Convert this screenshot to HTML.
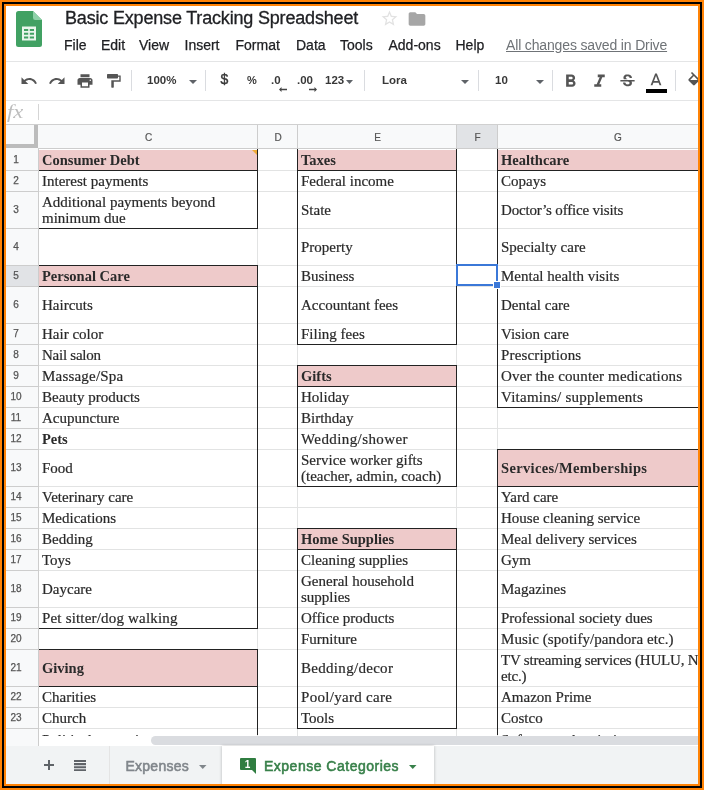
<!DOCTYPE html>
<html lang="en"><head><meta charset="utf-8"><title>Basic Expense Tracking Spreadsheet</title>
<style>
html,body{margin:0;padding:0;background:#fff}
body{width:704px;height:790px;overflow:hidden;position:relative;font-family:"Liberation Sans", sans-serif}
#frame{position:absolute;left:0;top:0;width:704px;height:790px;box-sizing:border-box;border:2px solid #ff8306;z-index:50;pointer-events:none}
#frame:before{content:"";position:absolute;left:0;top:0;right:0;bottom:0;border:2px solid #000}
#frame:after{content:"";position:absolute;left:2px;top:2px;right:2px;bottom:2px;border:2px solid #ff8306}
#app{position:absolute;left:0;top:0;width:704px;height:790px;overflow:hidden;background:#fff;will-change:transform}
.abs{position:absolute}
.t{position:absolute;white-space:nowrap}
#title{left:65px;top:7px;font-size:18px;line-height:22px;color:#202124;letter-spacing:-0.18px;-webkit-text-stroke:0.3px #202124}
.menu{top:36px;font-size:14px;line-height:18px;color:#202124;-webkit-text-stroke:0.25px #202124}
#saved{top:36px;left:506px;font-size:14px;line-height:18px;color:#6f7377;text-decoration:underline;letter-spacing:-0.15px}
.tb{top:71.5px;font-size:11.5px;line-height:16px;color:#383838;font-weight:bold}
.sep{position:absolute;top:70px;width:1px;height:21px;background:#dadce0}
.hl{position:absolute;height:1px;left:0;width:704px}
.vl{position:absolute;width:1px}
.cell{position:absolute;display:flex;align-items:center;font-family:"Liberation Serif", serif;font-size:15px;line-height:16px;color:#2a2a2a;-webkit-text-stroke:0.2px #2a2a2a;white-space:nowrap;overflow:hidden;box-sizing:border-box;padding-left:3px}
.cell.b{font-weight:bold;font-size:14.5px;-webkit-text-stroke:0}
.rn{position:absolute;left:6px;width:20px;text-align:center;font-size:10px;color:#555;line-height:12px;-webkit-text-stroke:0.25px #555}
.ch{position:absolute;top:131px;text-align:center;font-size:10px;color:#555;line-height:12px;-webkit-text-stroke:0.2px #555}
.tab{position:absolute;top:757px;font-size:14px;line-height:18px;-webkit-text-stroke:0.55px currentColor}

</style></head><body><div id="app">
<svg class="abs" style="left:16px;top:11px" width="26" height="36" viewBox="0 0 26 36">
<path d="M2.5 0H17l9 9v24.5A2.500 2.500 0 0 1 23.500 36H2.500A2.500 2.500 0 0 1 0 33.500V2.500A2.500 2.500 0 0 1 2.500 0z" fill="#41a163"/>
<path d="M17 0l9 9h-6.800A2.200 2.200 0 0 1 17 6.800z" fill="#8ed1a8"/>
<path d="M6 15.500h14v14H6z" fill="#e9f5ec"/>
<path d="M8 18h4.200v2H8zm5.800 0H18v2h-4.200zM8 21.700h4.200v2H8zm5.800 0H18v2h-4.200zM8 25.400h4.200v2H8zm5.800 0H18v2h-4.200z" fill="#41a163"/>
</svg>
<div class="t" id="title">Basic Expense Tracking Spreadsheet</div>
<svg class="abs" style="left:380px;top:9px" width="19" height="19" viewBox="0 0 24 24"><path fill="#e2e2e2" d="M22 9.240l-7.190-.620L12 2 9.190 8.630 2 9.240l5.460 4.730L5.820 21 12 17.270 18.180 21l-1.630-7.030L22 9.240zM12 15.400l-3.760 2.270 1-4.280-3.320-2.880 4.380-.380L12 6.100l1.710 4.040 4.380.380-3.320 2.880 1 4.280L12 15.400z"/></svg>
<svg class="abs" style="left:407px;top:9px" width="20" height="20" viewBox="0 0 24 24"><path fill="#a6a6a6" d="M10 4H4c-1.100 0-1.990.900-1.990 2L2 18c0 1.100.900 2 2 2h16c1.100 0 2-.900 2-2V8c0-1.100-.900-2-2-2h-8l-2-2z"/></svg>
<div class="t menu" style="left:64px">File</div>
<div class="t menu" style="left:101px">Edit</div>
<div class="t menu" style="left:139px">View</div>
<div class="t menu" style="left:184.5px">Insert</div>
<div class="t menu" style="left:235.5px">Format</div>
<div class="t menu" style="left:296px">Data</div>
<div class="t menu" style="left:340px">Tools</div>
<div class="t menu" style="left:388.5px">Add-ons</div>
<div class="t menu" style="left:455.5px">Help</div>
<div class="t" id="saved">All changes saved in Drive</div>
<div class="hl" style="top:61px;background:#e4e5e6"></div>
<svg class="abs" style="left:20.0px;top:72.0px" width="18" height="18" viewBox="0 0 24 24"><path fill="#555" d="M12.500 8c-2.650 0-5.050.990-6.900 2.600L2 7v9h9l-3.620-3.620c1.390-1.160 3.160-1.880 5.120-1.880 3.540 0 6.550 2.310 7.600 5.500l2.370-.780C21.080 11.030 17.150 8 12.500 8z"/></svg>
<svg class="abs" style="left:48.0px;top:72.0px" width="18" height="18" viewBox="0 0 24 24"><path fill="#555" d="M18.400 10.600C16.550 8.990 14.150 8 11.500 8c-4.650 0-8.580 3.030-9.960 7.220L3.900 16c1.050-3.190 4.050-5.500 7.600-5.500 1.950 0 3.730.720 5.120 1.880L13 16h9V7l-3.600 3.600z"/></svg>
<svg class="abs" style="left:76.0px;top:72.0px" width="18" height="18" viewBox="0 0 24 24"><path fill="#555" d="M19 8H5c-1.660 0-3 1.340-3 3v6h4v4h12v-4h4v-6c0-1.660-1.340-3-3-3zm-3 11H8v-5h8v5zm3-7c-.550 0-1-.450-1-1s.450-1 1-1 1 .450 1 1-.450 1-1 1zm-1-9H6v4h12V3z"/></svg>
<svg class="abs" style="left:104px;top:72px" width="18" height="18" viewBox="0 0 18 18"><path fill="#555" d="M3.700 2h9.600a.700.700 0 0 1 .700.700v3.100a.700.700 0 0 1-.700.700H3.700A.700.700 0 0 1 3 5.800V2.700A.700.700 0 0 1 3.700 2zM14 3.400h2.700v6.300H9.800v5.400a.600.600 0 0 1-.600.600H7.900a.600.600 0 0 1-.600-.600V8.300h8V4.800H14z"/></svg>
<div class="sep" style="left:131px"></div>
<div class="t tb" style="left:147px">100%</div>
<svg class="abs" style="left:189.0px;top:79.5px" width="8" height="4" viewBox="0 0 8 4"><path fill="#5f6368" d="M0 0h8l-4.0 4z"/></svg>
<div class="sep" style="left:205px"></div>
<div class="t tb" style="left:220.500px;font-size:14px;top:70.500px;font-weight:normal;-webkit-text-stroke:0.4px #383838">$</div>
<div class="t tb" style="left:247px;font-size:11px">%</div>
<div class="t tb" style="left:271px">.0</div>
<div class="t tb" style="left:297px">.00</div>
<svg class="abs" style="left:279px;top:87px" width="8" height="5" viewBox="0 0 8 5"><path fill="#444" d="M2.500 0v1.800H8v1.400H2.500V5L0 2.500z"/></svg>
<svg class="abs" style="left:309px;top:87px" width="8" height="5" viewBox="0 0 8 5"><path fill="#444" d="M5.500 0v1.800H0v1.400h5.500V5L8 2.500z"/></svg>
<div class="t tb" style="left:325px">123</div>
<svg class="abs" style="left:345.5px;top:79.5px" width="7" height="4" viewBox="0 0 7 4"><path fill="#5f6368" d="M0 0h7l-3.5 4z"/></svg>
<div class="sep" style="left:364px"></div>
<div class="t tb" style="left:382px">Lora</div>
<svg class="abs" style="left:461.0px;top:79.5px" width="8" height="4" viewBox="0 0 8 4"><path fill="#5f6368" d="M0 0h8l-4.0 4z"/></svg>
<div class="sep" style="left:478px"></div>
<div class="t tb" style="left:495px">10</div>
<svg class="abs" style="left:536.0px;top:79.5px" width="8" height="4" viewBox="0 0 8 4"><path fill="#5f6368" d="M0 0h8l-4.0 4z"/></svg>
<div class="sep" style="left:552px"></div>
<svg class="abs" style="left:559.85px;top:71.0px" width="21" height="21" viewBox="0 0 24 24"><path fill="#555" d="M15.600 10.790c.970-.670 1.650-1.770 1.650-2.790 0-2.260-1.750-4-4-4H7v14h7.040c2.090 0 3.710-1.700 3.710-3.790 0-1.520-.860-2.820-2.150-3.420zM10 6.500h3c.830 0 1.500.670 1.500 1.500s-.670 1.500-1.500 1.500h-3v-3zm3.500 9H10v-3h3.500c.830 0 1.500.670 1.500 1.500s-.670 1.500-1.500 1.500z"/></svg>
<svg class="abs" style="left:588.6px;top:71.0px" width="21" height="21" viewBox="0 0 24 24"><path fill="#555" d="M10 4v3h2.210l-3.420 8H6v3h8v-3h-2.210l3.420-8H18V4z"/></svg>
<svg class="abs" style="left:617.5px;top:72.1px" width="19" height="19" viewBox="0 0 24 24"><path fill="#555" d="M7.240 8.750c-.260-.480-.390-1.030-.390-1.670 0-.610.130-1.160.400-1.670.260-.500.630-.930 1.110-1.290.480-.350 1.050-.630 1.700-.830.660-.190 1.390-.290 2.180-.290.810 0 1.540.110 2.210.340.660.220 1.230.540 1.690.940.470.400.830.880 1.080 1.430.250.550.380 1.150.380 1.810h-3.010c0-.310-.050-.590-.150-.850-.090-.270-.240-.490-.440-.680-.200-.190-.450-.330-.750-.440-.300-.100-.660-.160-1.060-.160-.390 0-.740.040-1.030.130-.290.090-.530.210-.720.360-.190.160-.340.340-.440.550-.100.210-.150.430-.150.660 0 .480.250.880.740 1.210.380.250.770.480 1.410.700H7.390c-.050-.080-.110-.170-.150-.250zM21 12v-2H3v2h9.620c.180.070.400.140.550.200.370.170.660.340.870.510.210.170.350.360.430.570.070.200.110.430.110.690 0 .230-.050.450-.140.660-.090.200-.230.380-.420.530-.190.150-.420.260-.710.350-.290.080-.630.130-1.010.130-.430 0-.830-.040-1.180-.130s-.660-.230-.910-.420c-.250-.190-.450-.440-.590-.750-.140-.310-.250-.760-.250-1.210H6.400c0 .550.080 1.130.240 1.580.160.450.370.850.650 1.210.280.350.600.660.980.920.370.260.780.480 1.220.650.440.170.900.300 1.380.390.480.080.960.130 1.440.130.800 0 1.530-.090 2.180-.280s1.210-.450 1.670-.790c.460-.340.820-.770 1.070-1.270s.380-1.070.380-1.710c0-.600-.100-1.140-.310-1.610-.050-.110-.110-.230-.170-.330H21z"/></svg>
<svg class="abs" style="left:645.9px;top:70.9px" width="20" height="20" viewBox="0 0 24 24"><path fill="#555" d="M11 3L5.500 17h2.250l1.120-3h6.250l1.120 3h2.250L13 3h-2zm-1.380 9L12 5.670 14.380 12H9.620z"/></svg>
<div class="abs" style="left:646px;top:89px;width:21px;height:3.500px;background:#000"></div>
<div class="sep" style="left:675px"></div>
<svg class="abs" style="left:686.0px;top:71.5px" width="19" height="19" viewBox="0 0 24 24"><path fill="#555" d="M16.560 8.940L7.620 0 6.210 1.410l2.380 2.380-5.150 5.150c-.590.590-.590 1.540 0 2.120l5.500 5.500c.290.290.680.440 1.060.440s.770-.150 1.060-.440l5.500-5.500c.590-.580.590-1.530 0-2.120zM5.210 10L10 5.210 14.790 10H5.210zM19 11.500s-2 2.170-2 3.500c0 1.100.900 2 2 2s2-.900 2-2c0-1.330-2-3.500-2-3.500z"/></svg>
<div class="hl" style="top:100px;background:#e4e5e6"></div>
<div class="t" style="left:7px;top:102px;font-family:'Liberation Serif',serif;font-style:italic;font-size:18px;line-height:20px;color:#bdbdbd;transform:scaleX(1.25);transform-origin:0 0">fx</div>
<div class="vl" style="left:38px;top:104px;height:16px;background:#d5d5d5"></div>
<div class="hl" style="top:124px;background:#d0d0d0"></div>
<div class="abs" style="left:0;top:125px;width:704px;height:621px;overflow:hidden">
<div class="abs" style="left:0;top:0;width:704px;height:24px;background:#f8f9fa"></div>
<div class="abs" style="left:0;top:0;width:38px;height:621px;background:#f8f9fa"></div>
<div class="abs" style="left:457px;top:0;width:41px;height:24px;background:#e1e3e6"></div>
<div class="abs" style="left:0;top:141px;width:38px;height:20px;background:#e1e3e6"></div>
<div class="abs" style="left:0;top:19px;width:38px;height:4px;background:#bcbcbc"></div>
<div class="abs" style="left:34px;top:0;width:4px;height:23px;background:#bcbcbc"></div>
<div class="cell b" style="left:39px;top:25px;width:218px;height:20px;background:#eecaca;"><span>Consumer Debt</span></div>
<div class="cell" style="left:39px;top:46px;width:218px;height:20px;"><span>Interest payments</span></div>
<div class="cell" style="left:39px;top:67px;width:218px;height:36px;"><span>Additional payments beyond<br>minimum due</span></div>
<div class="cell b" style="left:39px;top:141px;width:218px;height:20px;background:#eecaca;"><span>Personal Care</span></div>
<div class="cell" style="left:39px;top:162px;width:218px;height:36px;"><span>Haircuts</span></div>
<div class="cell" style="left:39px;top:199px;width:218px;height:20px;"><span>Hair color</span></div>
<div class="cell" style="left:39px;top:220px;width:218px;height:20px;letter-spacing:-0.25px;"><span>Nail salon</span></div>
<div class="cell" style="left:39px;top:241px;width:218px;height:20px;letter-spacing:0.2px;"><span>Massage/Spa</span></div>
<div class="cell" style="left:39px;top:262px;width:218px;height:20px;"><span>Beauty products</span></div>
<div class="cell" style="left:39px;top:283px;width:218px;height:20px;"><span>Acupuncture</span></div>
<div class="cell b" style="left:39px;top:304px;width:218px;height:20px;"><span>Pets</span></div>
<div class="cell" style="left:39px;top:325px;width:218px;height:36px;"><span>Food</span></div>
<div class="cell" style="left:39px;top:362px;width:218px;height:20px;"><span>Veterinary care</span></div>
<div class="cell" style="left:39px;top:383px;width:218px;height:20px;"><span>Medications</span></div>
<div class="cell" style="left:39px;top:404px;width:218px;height:20px;"><span>Bedding</span></div>
<div class="cell" style="left:39px;top:425px;width:218px;height:20px;"><span>Toys</span></div>
<div class="cell" style="left:39px;top:446px;width:218px;height:36px;"><span>Daycare</span></div>
<div class="cell" style="left:39px;top:483px;width:218px;height:20px;letter-spacing:0.18px;"><span>Pet sitter/dog walking</span></div>
<div class="cell b" style="left:39px;top:525px;width:218px;height:36px;background:#eecaca;"><span>Giving</span></div>
<div class="cell" style="left:39px;top:562px;width:218px;height:20px;"><span>Charities</span></div>
<div class="cell" style="left:39px;top:583px;width:218px;height:20px;"><span>Church</span></div>
<div class="cell" style="left:39px;top:604px;width:218px;height:20px;padding-top:2px;"><span>Political campaigns</span></div>
<div class="cell b" style="left:298px;top:25px;width:158px;height:20px;background:#eecaca;"><span>Taxes</span></div>
<div class="cell" style="left:298px;top:46px;width:158px;height:20px;"><span>Federal income</span></div>
<div class="cell" style="left:298px;top:67px;width:158px;height:36px;"><span>State</span></div>
<div class="cell" style="left:298px;top:104px;width:158px;height:36px;"><span>Property</span></div>
<div class="cell" style="left:298px;top:141px;width:158px;height:20px;"><span>Business</span></div>
<div class="cell" style="left:298px;top:162px;width:158px;height:36px;"><span>Accountant fees</span></div>
<div class="cell" style="left:298px;top:199px;width:158px;height:20px;"><span>Filing fees</span></div>
<div class="cell b" style="left:298px;top:241px;width:158px;height:20px;background:#eecaca;"><span>Gifts</span></div>
<div class="cell" style="left:298px;top:262px;width:158px;height:20px;"><span>Holiday</span></div>
<div class="cell" style="left:298px;top:283px;width:158px;height:20px;"><span>Birthday</span></div>
<div class="cell" style="left:298px;top:304px;width:158px;height:20px;letter-spacing:0.4px;"><span>Wedding/shower</span></div>
<div class="cell" style="left:298px;top:325px;width:158px;height:36px;"><span>Service worker gifts<br>(teacher, admin, coach)</span></div>
<div class="cell b" style="left:298px;top:404px;width:158px;height:20px;background:#eecaca;"><span>Home Supplies</span></div>
<div class="cell" style="left:298px;top:425px;width:158px;height:20px;"><span>Cleaning supplies</span></div>
<div class="cell" style="left:298px;top:446px;width:158px;height:36px;"><span>General household<br>supplies</span></div>
<div class="cell" style="left:298px;top:483px;width:158px;height:20px;"><span>Office products</span></div>
<div class="cell" style="left:298px;top:504px;width:158px;height:20px;"><span>Furniture</span></div>
<div class="cell" style="left:298px;top:525px;width:158px;height:36px;letter-spacing:0.3px;"><span>Bedding/decor</span></div>
<div class="cell" style="left:298px;top:562px;width:158px;height:20px;letter-spacing:0.3px;"><span>Pool/yard care</span></div>
<div class="cell" style="left:298px;top:583px;width:158px;height:20px;"><span>Tools</span></div>
<div class="cell b" style="left:498px;top:25px;width:239px;height:20px;background:#eecaca;"><span>Healthcare</span></div>
<div class="cell" style="left:498px;top:46px;width:239px;height:20px;"><span>Copays</span></div>
<div class="cell" style="left:498px;top:67px;width:239px;height:36px;letter-spacing:-0.18px;"><span>Doctor’s office visits</span></div>
<div class="cell" style="left:498px;top:104px;width:239px;height:36px;"><span>Specialty care</span></div>
<div class="cell" style="left:498px;top:141px;width:239px;height:20px;"><span>Mental health visits</span></div>
<div class="cell" style="left:498px;top:162px;width:239px;height:36px;"><span>Dental care</span></div>
<div class="cell" style="left:498px;top:199px;width:239px;height:20px;"><span>Vision care</span></div>
<div class="cell" style="left:498px;top:220px;width:239px;height:20px;letter-spacing:0.15px;"><span>Prescriptions</span></div>
<div class="cell" style="left:498px;top:241px;width:239px;height:20px;letter-spacing:0.15px;"><span>Over the counter medications</span></div>
<div class="cell" style="left:498px;top:262px;width:239px;height:20px;letter-spacing:0.24px;"><span>Vitamins/ supplements</span></div>
<div class="cell b" style="left:498px;top:325px;width:239px;height:36px;background:#eecaca;letter-spacing:0.35px;"><span>Services/Memberships</span></div>
<div class="cell" style="left:498px;top:362px;width:239px;height:20px;"><span>Yard care</span></div>
<div class="cell" style="left:498px;top:383px;width:239px;height:20px;"><span>House cleaning service</span></div>
<div class="cell" style="left:498px;top:404px;width:239px;height:20px;"><span>Meal delivery services</span></div>
<div class="cell" style="left:498px;top:425px;width:239px;height:20px;"><span>Gym</span></div>
<div class="cell" style="left:498px;top:446px;width:239px;height:36px;"><span>Magazines</span></div>
<div class="cell" style="left:498px;top:483px;width:239px;height:20px;"><span>Professional society dues</span></div>
<div class="cell" style="left:498px;top:504px;width:239px;height:20px;letter-spacing:0.08px;"><span>Music (spotify/pandora etc.)</span></div>
<div class="cell" style="left:498px;top:525px;width:239px;height:36px;letter-spacing:-0.2px;"><span>TV streaming services (HULU, Netflix<br>etc.)</span></div>
<div class="cell" style="left:498px;top:562px;width:239px;height:20px;"><span>Amazon Prime</span></div>
<div class="cell" style="left:498px;top:583px;width:239px;height:20px;"><span>Costco</span></div>
<div class="cell" style="left:498px;top:604px;width:239px;height:20px;padding-top:2px;"><span>Software subscriptions</span></div>
<div class="hl" style="top:45px;background:#e2e3e3"></div>
<div class="hl" style="top:66px;background:#e2e3e3"></div>
<div class="hl" style="top:103px;background:#e2e3e3"></div>
<div class="hl" style="top:140px;background:#e2e3e3"></div>
<div class="hl" style="top:161px;background:#e2e3e3"></div>
<div class="hl" style="top:198px;background:#e2e3e3"></div>
<div class="hl" style="top:219px;background:#e2e3e3"></div>
<div class="hl" style="top:240px;background:#e2e3e3"></div>
<div class="hl" style="top:261px;background:#e2e3e3"></div>
<div class="hl" style="top:282px;background:#e2e3e3"></div>
<div class="hl" style="top:303px;background:#e2e3e3"></div>
<div class="hl" style="top:324px;background:#e2e3e3"></div>
<div class="hl" style="top:361px;background:#e2e3e3"></div>
<div class="hl" style="top:382px;background:#e2e3e3"></div>
<div class="hl" style="top:403px;background:#e2e3e3"></div>
<div class="hl" style="top:424px;background:#e2e3e3"></div>
<div class="hl" style="top:445px;background:#e2e3e3"></div>
<div class="hl" style="top:482px;background:#e2e3e3"></div>
<div class="hl" style="top:503px;background:#e2e3e3"></div>
<div class="hl" style="top:524px;background:#e2e3e3"></div>
<div class="hl" style="top:561px;background:#e2e3e3"></div>
<div class="hl" style="top:582px;background:#e2e3e3"></div>
<div class="hl" style="top:603px;background:#e2e3e3"></div>
<div class="hl" style="top:624px;background:#e2e3e3"></div>
<div class="hl" style="top:23px;background:#cdcdcd;left:38px"></div>
<div class="vl" style="left:257px;top:0;height:621px;background:#e2e3e3"></div>
<div class="vl" style="left:257px;top:0;height:24px;background:#cdcdcd"></div>
<div class="vl" style="left:297px;top:0;height:621px;background:#e2e3e3"></div>
<div class="vl" style="left:297px;top:0;height:24px;background:#cdcdcd"></div>
<div class="vl" style="left:456px;top:0;height:621px;background:#e2e3e3"></div>
<div class="vl" style="left:456px;top:0;height:24px;background:#cdcdcd"></div>
<div class="vl" style="left:497px;top:0;height:621px;background:#e2e3e3"></div>
<div class="vl" style="left:497px;top:0;height:24px;background:#cdcdcd"></div>
<div class="vl" style="left:737px;top:0;height:621px;background:#e2e3e3"></div>
<div class="vl" style="left:737px;top:0;height:24px;background:#cdcdcd"></div>
<div class="vl" style="left:38px;top:24px;height:621px;background:#cdcdcd"></div>
<div class="hl" style="top:45px;background:#cdcdcd;width:38px"></div>
<div class="hl" style="top:66px;background:#cdcdcd;width:38px"></div>
<div class="hl" style="top:103px;background:#cdcdcd;width:38px"></div>
<div class="hl" style="top:140px;background:#cdcdcd;width:38px"></div>
<div class="hl" style="top:161px;background:#cdcdcd;width:38px"></div>
<div class="hl" style="top:198px;background:#cdcdcd;width:38px"></div>
<div class="hl" style="top:219px;background:#cdcdcd;width:38px"></div>
<div class="hl" style="top:240px;background:#cdcdcd;width:38px"></div>
<div class="hl" style="top:261px;background:#cdcdcd;width:38px"></div>
<div class="hl" style="top:282px;background:#cdcdcd;width:38px"></div>
<div class="hl" style="top:303px;background:#cdcdcd;width:38px"></div>
<div class="hl" style="top:324px;background:#cdcdcd;width:38px"></div>
<div class="hl" style="top:361px;background:#cdcdcd;width:38px"></div>
<div class="hl" style="top:382px;background:#cdcdcd;width:38px"></div>
<div class="hl" style="top:403px;background:#cdcdcd;width:38px"></div>
<div class="hl" style="top:424px;background:#cdcdcd;width:38px"></div>
<div class="hl" style="top:445px;background:#cdcdcd;width:38px"></div>
<div class="hl" style="top:482px;background:#cdcdcd;width:38px"></div>
<div class="hl" style="top:503px;background:#cdcdcd;width:38px"></div>
<div class="hl" style="top:524px;background:#cdcdcd;width:38px"></div>
<div class="hl" style="top:561px;background:#cdcdcd;width:38px"></div>
<div class="hl" style="top:582px;background:#cdcdcd;width:38px"></div>
<div class="hl" style="top:603px;background:#cdcdcd;width:38px"></div>
<div class="hl" style="top:624px;background:#cdcdcd;width:38px"></div>
<div class="abs" style="left:39px;top:45px;width:219px;height:1px;background:#222"></div>
<div class="abs" style="left:39px;top:103px;width:219px;height:1px;background:#222"></div>
<div class="abs" style="left:39px;top:140px;width:219px;height:1px;background:#222"></div>
<div class="abs" style="left:39px;top:161px;width:219px;height:1px;background:#222"></div>
<div class="abs" style="left:39px;top:503px;width:219px;height:1px;background:#222"></div>
<div class="abs" style="left:39px;top:524px;width:219px;height:1px;background:#222"></div>
<div class="abs" style="left:39px;top:561px;width:219px;height:1px;background:#222"></div>
<div class="abs" style="left:257px;top:24px;width:1px;height:80px;background:#222"></div>
<div class="abs" style="left:257px;top:140px;width:1px;height:364px;background:#222"></div>
<div class="abs" style="left:257px;top:524px;width:1px;height:86px;background:#222"></div>
<div class="abs" style="left:297px;top:45px;width:160px;height:1px;background:#222"></div>
<div class="abs" style="left:297px;top:219px;width:160px;height:1px;background:#222"></div>
<div class="abs" style="left:297px;top:240px;width:160px;height:1px;background:#222"></div>
<div class="abs" style="left:297px;top:261px;width:160px;height:1px;background:#222"></div>
<div class="abs" style="left:297px;top:361px;width:160px;height:1px;background:#222"></div>
<div class="abs" style="left:297px;top:403px;width:160px;height:1px;background:#222"></div>
<div class="abs" style="left:297px;top:424px;width:160px;height:1px;background:#222"></div>
<div class="abs" style="left:297px;top:603px;width:160px;height:1px;background:#222"></div>
<div class="abs" style="left:297px;top:24px;width:1px;height:196px;background:#222"></div>
<div class="abs" style="left:297px;top:240px;width:1px;height:122px;background:#222"></div>
<div class="abs" style="left:297px;top:403px;width:1px;height:201px;background:#222"></div>
<div class="abs" style="left:456px;top:24px;width:1px;height:196px;background:#222"></div>
<div class="abs" style="left:456px;top:240px;width:1px;height:122px;background:#222"></div>
<div class="abs" style="left:456px;top:403px;width:1px;height:201px;background:#222"></div>
<div class="abs" style="left:497px;top:45px;width:207px;height:1px;background:#222"></div>
<div class="abs" style="left:497px;top:282px;width:207px;height:1px;background:#222"></div>
<div class="abs" style="left:497px;top:324px;width:207px;height:1px;background:#222"></div>
<div class="abs" style="left:497px;top:361px;width:207px;height:1px;background:#222"></div>
<div class="abs" style="left:497px;top:24px;width:1px;height:259px;background:#222"></div>
<div class="abs" style="left:497px;top:324px;width:1px;height:286px;background:#222"></div>
<svg class="abs" style="left:252px;top:25px" width="5" height="5" viewBox="0 0 5 5"><path d="M0 0h5v5z" fill="#efaa35"/></svg>
<div class="abs" style="left:456px;top:139px;width:42px;height:22px;box-sizing:border-box;border:2px solid #3b78d8"></div>
<div class="abs" style="left:494px;top:157px;width:6px;height:6px;background:#3b78d8;border:1px solid #fff;box-sizing:content-box;margin:-1px"></div>
<div class="rn" style="top:29.0px">1</div>
<div class="rn" style="top:50.0px">2</div>
<div class="rn" style="top:79.0px">3</div>
<div class="rn" style="top:116.0px">4</div>
<div class="rn" style="top:145.0px">5</div>
<div class="rn" style="top:174.0px">6</div>
<div class="rn" style="top:203.0px">7</div>
<div class="rn" style="top:224.0px">8</div>
<div class="rn" style="top:245.0px">9</div>
<div class="rn" style="top:266.0px">10</div>
<div class="rn" style="top:287.0px">11</div>
<div class="rn" style="top:308.0px">12</div>
<div class="rn" style="top:337.0px">13</div>
<div class="rn" style="top:366.0px">14</div>
<div class="rn" style="top:387.0px">15</div>
<div class="rn" style="top:408.0px">16</div>
<div class="rn" style="top:429.0px">17</div>
<div class="rn" style="top:458.0px">18</div>
<div class="rn" style="top:487.0px">19</div>
<div class="rn" style="top:508.0px">20</div>
<div class="rn" style="top:537.0px">21</div>
<div class="rn" style="top:566.0px">22</div>
<div class="rn" style="top:587.0px">23</div>
<div class="ch" style="left:39px;width:219px;top:7px">C</div>
<div class="ch" style="left:258px;width:40px;top:7px">D</div>
<div class="ch" style="left:298px;width:159px;top:7px">E</div>
<div class="ch" style="left:457px;width:41px;top:7px">F</div>
<div class="ch" style="left:498px;width:240px;top:7px">G</div>
<div class="abs" style="left:39px;top:611px;width:704px;height:10px;background:#fff"></div>
<div class="abs" style="left:151px;top:611px;width:600px;height:9px;border-radius:4.500px;background:#dadce0"></div>
</div>
<div class="abs" style="left:0;top:746px;width:704px;height:44px;background:#f1f3f4"></div>
<div class="abs" style="left:222px;top:746px;width:212px;height:44px;background:#fff;box-shadow:0 0 3px rgba(0,0,0,.25)"></div>
<div class="vl" style="left:109px;top:746px;height:40px;background:#e4e4e4"></div>
<svg class="abs" style="left:44px;top:760px" width="10" height="10" viewBox="0 0 10 10"><path fill="#5f6368" d="M4 0h2v4h4v2H6v4H4V6H0V4h4z"/></svg>
<svg class="abs" style="left:73.700px;top:759.800px" width="12.300" height="11.400" viewBox="0 0 13 11" preserveAspectRatio="none"><path fill="#5f6368" d="M0 0h13v2H0zM0 3h13v2H0zM0 6h13v2H0zM0 9h13v2H0z"/></svg>
<div class="tab" style="left:125.500px;letter-spacing:0.25px;color:#80868b">Expenses</div>
<svg class="abs" style="left:199.25px;top:764.5px" width="7.5" height="4" viewBox="0 0 7.5 4"><path fill="#80868b" d="M0 0h7.5l-3.75 4z"/></svg>
<svg class="abs" style="left:240px;top:758px" width="16" height="16" viewBox="0 0 16 16"><path fill="#2f7d40" d="M1 0h14a1 1 0 0 1 1 1v15l-4-4H1a1 1 0 0 1-1-1V1a1 1 0 0 1 1-1z"/><text x="7.500" y="9.500" text-anchor="middle" font-family="Liberation Sans, sans-serif" font-weight="bold" font-size="10" fill="#fff">1</text></svg>
<div class="tab" style="left:264px;letter-spacing:0.5px;color:#38804a">Expense Categories</div>
<svg class="abs" style="left:409.25px;top:764.5px" width="7.5" height="4" viewBox="0 0 7.5 4"><path fill="#38804a" d="M0 0h7.5l-3.75 4z"/></svg>
</div><div id="frame"></div></body></html>
